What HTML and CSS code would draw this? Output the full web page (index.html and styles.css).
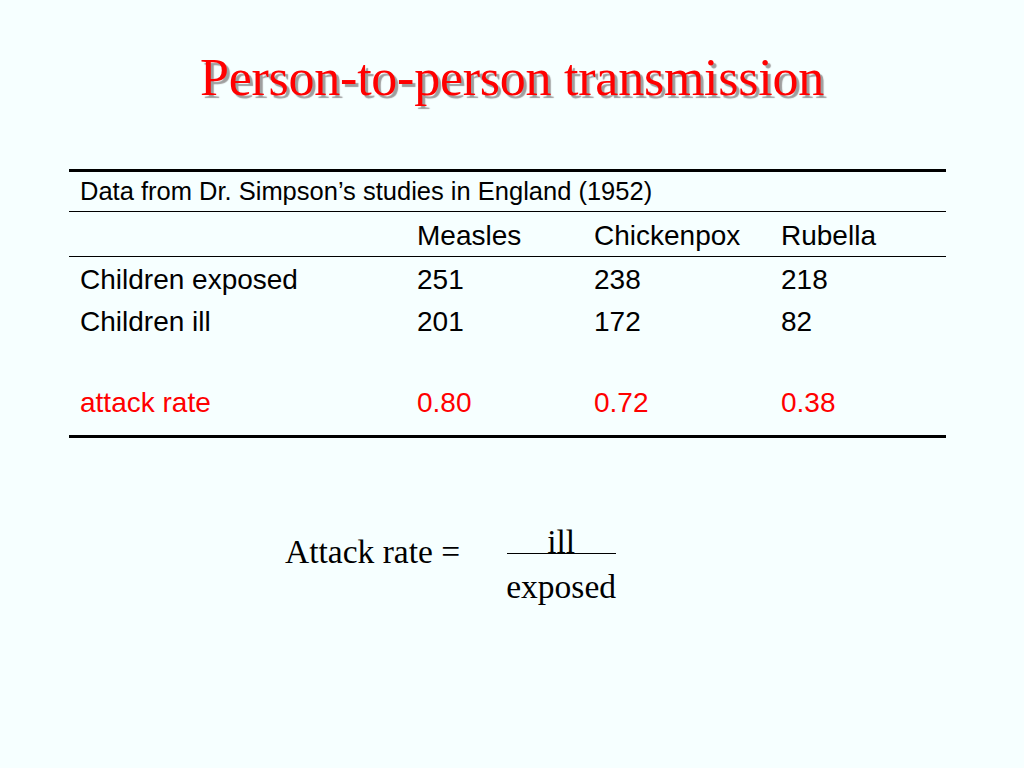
FILE: index.html
```html
<!DOCTYPE html>
<html>
<head>
<meta charset="utf-8">
<link rel="stylesheet" href="styles.css">
</head>
<body>
<div class="slide">
  <h1 class="title">Person-to-person transmission</h1>
  <table class="data">
    <colgroup>
      <col class="c1"><col class="c2"><col class="c3"><col class="c4">
    </colgroup>
    <tr class="caption-row"><td colspan="4">Data from Dr. Simpson’s studies in England (1952)</td></tr>
    <tr class="head-row"><td></td><td>Measles</td><td>Chickenpox</td><td>Rubella</td></tr>
    <tr class="row first"><td>Children exposed</td><td>251</td><td>238</td><td>218</td></tr>
    <tr class="row"><td>Children ill</td><td>201</td><td>172</td><td>82</td></tr>
    <tr class="row spacer"><td colspan="4"></td></tr>
    <tr class="row rate"><td>attack rate</td><td>0.80</td><td>0.72</td><td>0.38</td></tr>
  </table>
  <div class="formula">
    <span class="label">Attack rate =</span>
    <span class="fraction">
      <span class="num">ill</span>
      <span class="den">exposed</span>
    </span>
  </div>
</div>
</body>
</html>
```

FILE: styles.css
```css
html, body {
  margin: 0;
  padding: 0;
  background: #f6ffff;
}
.slide {
  width: 1024px;
  height: 768px;
}
.title {
  margin: 0;
  padding-top: 48px;
  text-align: center;
  font-family: "Liberation Serif", serif;
  font-weight: normal;
  font-size: 52px;
  letter-spacing: -0.25px;
  line-height: 60px;
  color: #ff0000;
  text-shadow: 3px 3px 1px #9e9e9e;
}
.data {
  margin: 61px 0 0 69px;
  width: 877px;
  border-collapse: collapse;
  font-family: "Liberation Sans", Arial, sans-serif;
  font-size: 28px;
  color: #000;
  border-top: 3px solid #000;
  border-bottom: 3px solid #000;
}
.c1 { width: 337px; }
.c2 { width: 177px; }
.c3 { width: 187px; }
.c4 { width: 176px; }
.data td {
  padding: 0 0 0 11px;
  vertical-align: middle;
  white-space: nowrap;
}
.caption-row td {
  font-size: 25.5px;
  height: 39px;
  border-bottom: 1px solid #000;
}
.head-row td {
  height: 41px;
  padding-top: 3px;
  border-bottom: 1px solid #000;
}
.row td {
  height: 39px;
  padding-top: 3px;
}
.row.spacer td {
  height: 40px;
  padding-top: 0;
}
.row.rate td {
  color: #ff0000;
  height: 40px;
  padding-top: 2px;
  padding-bottom: 12px;
}
.formula {
  display: flex;
  align-items: flex-start;
  margin: 92px 0 0 285px;
  font-family: "Liberation Serif", serif;
  font-size: 33.5px;
  color: #000;
}
.label {
  line-height: 44px;
}
.fraction {
  display: flex;
  flex-direction: column;
  align-items: center;
  margin-left: 45px;
  width: 112px;
}
.num {
  width: 109px;
  text-align: center;
  line-height: 23px;
  border-bottom: 1px solid #000;
}
.den {
  line-height: 36px;
  padding-top: 15px;
}
```
